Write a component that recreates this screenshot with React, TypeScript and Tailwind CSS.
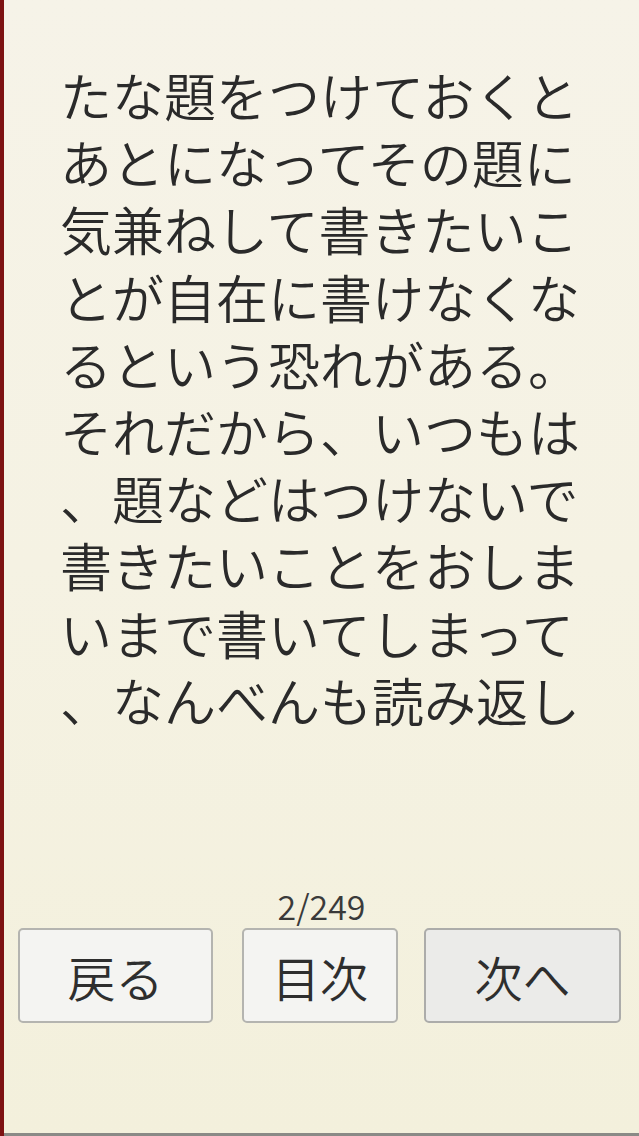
const lines = [
  "たな題をつけておくと",
  "あとになってその題に",
  "気兼ねして書きたいこ",
  "とが自在に書けなくな",
  "るという恐れがある。",
  "それだから、いつもは",
  "、題などはつけないで",
  "書きたいことをおしま",
  "いまで書いてしまって",
  "、なんべんも読み返し",
];

const font = { fontFamily: '"Noto Sans CJK JP", "Noto Sans", sans-serif' };

export default function App() {
  return (
    <div
      className="w-[639px] h-[1136px] flex bg-gradient-to-b from-[#f6f3e8] via-[#f5f2e3] to-[#f3f0dc] text-[#2a2a2a] overflow-hidden"
      style={font}
    >
      <div className="w-[4px] h-full bg-[#7d1212]" />
      <div className="flex-1 flex flex-col border-b-[3px] border-[#8a8a86]">
        <div className="pl-[56px] pt-[61px] h-[886px] font-[350]">
          {lines.map((l, i) => (
            <div key={i} className="text-[52px] leading-[67.2px] whitespace-nowrap">
              {l}
            </div>
          ))}
        </div>
        <div className="text-center text-[34px] leading-[40px] text-[#3a3a3a] font-[350]">2/249</div>
        <div className="flex pl-[14px] mt-[2px] gap-[30px]">
          <button className="w-[195px] h-[95px] rounded-[5px] border-2 border-[#b4b4b0] bg-[#f4f4f2] text-[48px] text-[#2e2e2e] font-[350]">
            戻る
          </button>
          <button className="w-[156px] h-[95px] rounded-[5px] border-2 border-[#b4b4b0] bg-[#f4f4f2] text-[48px] text-[#2e2e2e] font-[350] -ml-[1px]">
            目次
          </button>
          <button className="w-[197px] h-[95px] rounded-[5px] border-2 border-[#acacaa] bg-[#ebebe9] text-[48px] text-[#2e2e2e] font-[350] -ml-[4px]">
            次へ
          </button>
        </div>
      </div>
    </div>
  );
}
